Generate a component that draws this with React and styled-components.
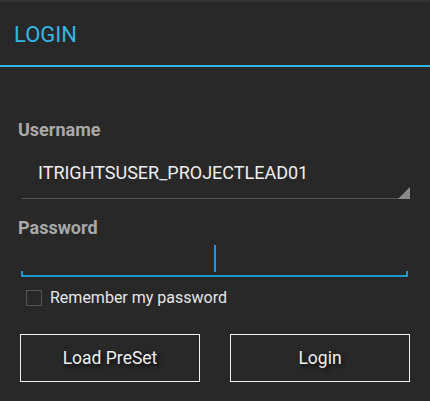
import React from "react";
import styled, { createGlobalStyle } from "styled-components";

const GlobalStyle = createGlobalStyle`
  html, body {
    margin: 0;
    padding: 0;
    background: #282828;
  }
  body {
    font-family: Roboto, "Liberation Sans", sans-serif;
  }
`;

const Screen = styled.div`
  width: 430px;
  height: 401px;
  background: #282828;
  border-top: 2px solid #333333;
  box-sizing: border-box;
  overflow: hidden;
`;

const Header = styled.header`
  height: 63px;
  display: flex;
  align-items: center;
  padding-left: 14px;
  border-bottom: 2px solid #33b5e5;
`;

const Title = styled.h1`
  margin: 0;
  margin-top: 2px;
  font-size: 22px;
  font-weight: 400;
  color: #33b5e5;
`;

const Form = styled.div`
  display: flex;
  flex-direction: column;
  padding: 52px 20px 0 18px;
`;

const Label = styled.div`
  font-size: 18px;
  font-weight: 700;
  color: #a9a9a9;
  line-height: 22px;
`;

const Spinner = styled.div`
  position: relative;
  height: 46px;
  box-sizing: border-box;
  margin: 12px 2px 18px 4px;
  padding: 0 0 7px 16px;
  display: flex;
  align-items: center;
  border-bottom: 1px solid #555555;
  font-size: 18px;
  color: #eeeeee;
`;

const Corner = styled.div`
  position: absolute;
  right: -2px;
  bottom: -1px;
  width: 0;
  height: 0;
  border-left: 12px solid transparent;
  border-bottom: 12px solid #8a8a8a;
`;

const Field = styled.div`
  position: relative;
  height: 36px;
  margin: 0 2px 0 3px;
  border-bottom: 2px solid #1f98cf;
  display: flex;
  justify-content: center;
  &::before,
  &::after {
    content: "";
    position: absolute;
    bottom: 0;
    width: 2px;
    height: 4px;
    background: #1f98cf;
  }
  &::before { left: 0; }
  &::after { right: 0; }
`;

const Cursor = styled.span`
  width: 2px;
  height: 27px;
  margin-top: 6px;
  background: #2c93e0;
`;

const CheckRow = styled.label`
  display: flex;
  align-items: center;
  gap: 8px;
  margin: 11px 0 0 8px;
  font-size: 16px;
  color: #e6e6e6;
`;

const Box = styled.span`
  width: 14px;
  height: 14px;
  border: 1px solid #555555;
`;

const Buttons = styled.div`
  display: flex;
  justify-content: space-between;
  margin: 27px 0 0 2px;
`;

const Button = styled.button`
  width: 180px;
  height: 48px;
  background: transparent;
  border: 1px solid #f2f2f2;
  color: #eeeeee;
  font-family: Roboto, "Liberation Sans", sans-serif;
  font-size: 17.5px;
  text-shadow: 2px 2px 4px rgba(0, 0, 0, 0.8);
  padding: 0;
`;

export default function App() {
  return (
    <>
      <GlobalStyle />
      <Screen>
        <Header>
          <Title>LOGIN</Title>
        </Header>
        <Form>
          <Label>Username</Label>
          <Spinner>
            ITRIGHTSUSER_PROJECTLEAD01
            <Corner />
          </Spinner>
          <Label>Password</Label>
          <Field>
            <Cursor />
          </Field>
          <CheckRow>
            <Box />
            Remember my password
          </CheckRow>
          <Buttons>
            <Button>Load PreSet</Button>
            <Button>Login</Button>
          </Buttons>
        </Form>
      </Screen>
    </>
  );
}
